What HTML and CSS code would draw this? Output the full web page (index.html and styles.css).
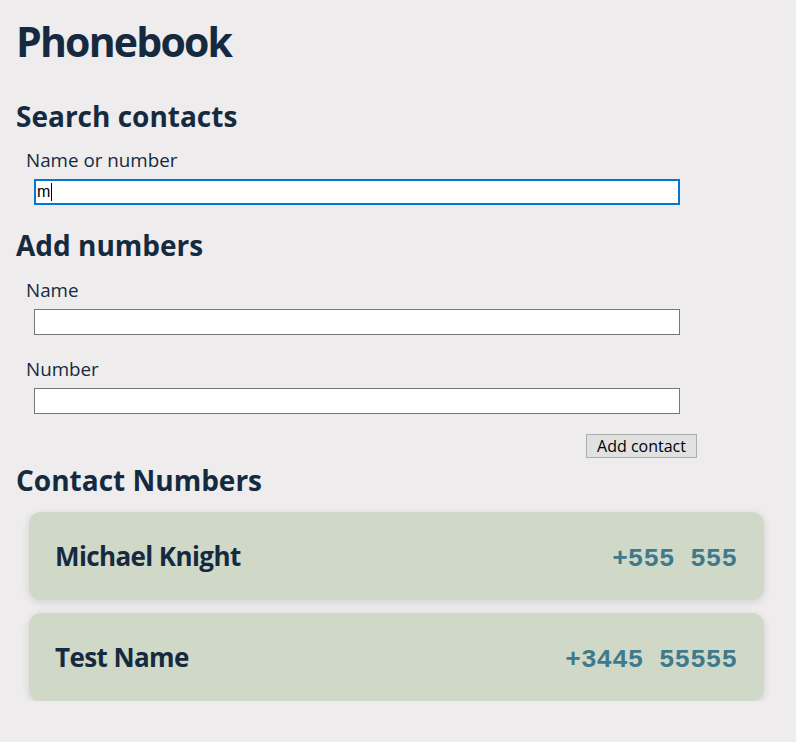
FILE: index.html
```html
<!DOCTYPE html>
<html lang="en">
<head>
<meta charset="utf-8">
<title>Phonebook</title>
<link rel="stylesheet" href="styles.css">
</head>
<body>
<main class="app">
  <h1 class="title">Phonebook</h1>

  <h2 class="section-title st-search">Search contacts</h2>
  <div class="field field-search">
    <label class="field-label" for="search">Name or number</label>
    <input class="field-input is-focused" id="search" type="text" value="m">
    <span class="caret" aria-hidden="true"></span>
  </div>

  <h2 class="section-title st-add">Add numbers</h2>
  <form class="add-form">
    <div class="field field-first">
      <label class="field-label" for="name">Name</label>
      <input class="field-input" id="name" type="text">
    </div>
    <div class="field field-second">
      <label class="field-label" for="number">Number</label>
      <input class="field-input" id="number" type="text">
    </div>
    <div class="form-actions">
      <button class="btn" type="button">Add contact</button>
    </div>
  </form>

  <h2 class="section-title st-list">Contact Numbers</h2>
  <ul class="contacts">
    <li class="contact">
      <span class="contact-name">Michael Knight</span>
      <span class="contact-number">+555 555</span>
    </li>
    <li class="contact">
      <span class="contact-name">Test Name</span>
      <span class="contact-number">+3445 55555</span>
    </li>
  </ul>
</main>
</body>
</html>
```

FILE: styles.css
```css
* { box-sizing: border-box; }

html, body {
  margin: 0;
  background: #eeecec;
}

body {
  padding: 16px 16px 0 16px;
  font-family: "Open Sans", "Noto Sans", sans-serif;
  color: #152a3f;
}

.app {
  display: flex;
  flex-direction: column;
}

.title {
  margin: 0;
  font-size: 41px;
  line-height: 50px;
  font-weight: 700;
  letter-spacing: -1.8px;
}

.section-title {
  margin: 0;
  font-size: 28px;
  line-height: 34px;
  font-weight: 700;
}

.st-search { margin-top: 33px; }
.st-add { margin-top: 23px; }
.st-list { margin-top: 5px; }

.field {
  display: flex;
  flex-direction: column;
  margin-top: 15px;
}

.field-search { position: relative; }

.caret {
  position: absolute;
  left: 35px;
  top: 35px;
  width: 1px;
  height: 18px;
  background: #000;
}

.field-first { margin-top: 16px; }
.field-second { margin-top: 22px; }

.field-label {
  padding-left: 10px;
  font-size: 18.8px;
  line-height: 24px;
}

.field-input {
  margin: 7px 0 0 18px;
  width: 646px;
  height: 26px;
  border: 1px solid #767676;
  background: #fff;
  padding: 2px 2px;
  font-family: "Liberation Sans", Arial, sans-serif;
  font-size: 16px;
  color: #000;
  outline: none;
}

.field-input.is-focused {
  border: 2px solid #0078d4;
  padding: 1px 1px;
}

.add-form {
  display: flex;
  flex-direction: column;
}

.form-actions {
  display: flex;
  margin-top: 20px;
  padding-left: 570px;
}

.btn {
  width: 111px;
  height: 24px;
  background: #e1e1e1;
  border: 1px solid #adadad;
  border-radius: 0;
  font-family: "Open Sans", "Noto Sans", sans-serif;
  font-size: 16px;
  line-height: 20px;
  color: #000;
  padding: 0;
}

.contacts {
  list-style: none;
  margin: 15px 16px 0 13px;
  padding: 0;
  display: flex;
  flex-direction: column;
  gap: 13px;
}

.contact {
  display: flex;
  align-items: baseline;
  justify-content: space-between;
  height: 88px;
  padding: 26px 27px 0 26px;
  background: #d0d8c7;
  border-radius: 12px;
  box-shadow: 0 2px 8px rgba(0, 0, 0, 0.12);
}

.contact-name {
  font-size: 26px;
  line-height: 36px;
  font-weight: 700;
  letter-spacing: -0.6px;
  color: #152a3f;
}

.contact-number {
  font-family: "Liberation Mono", "Courier New", monospace;
  font-size: 26px;
  line-height: 36px;
  font-weight: 700;
  color: #3e7a8b;
}
```
